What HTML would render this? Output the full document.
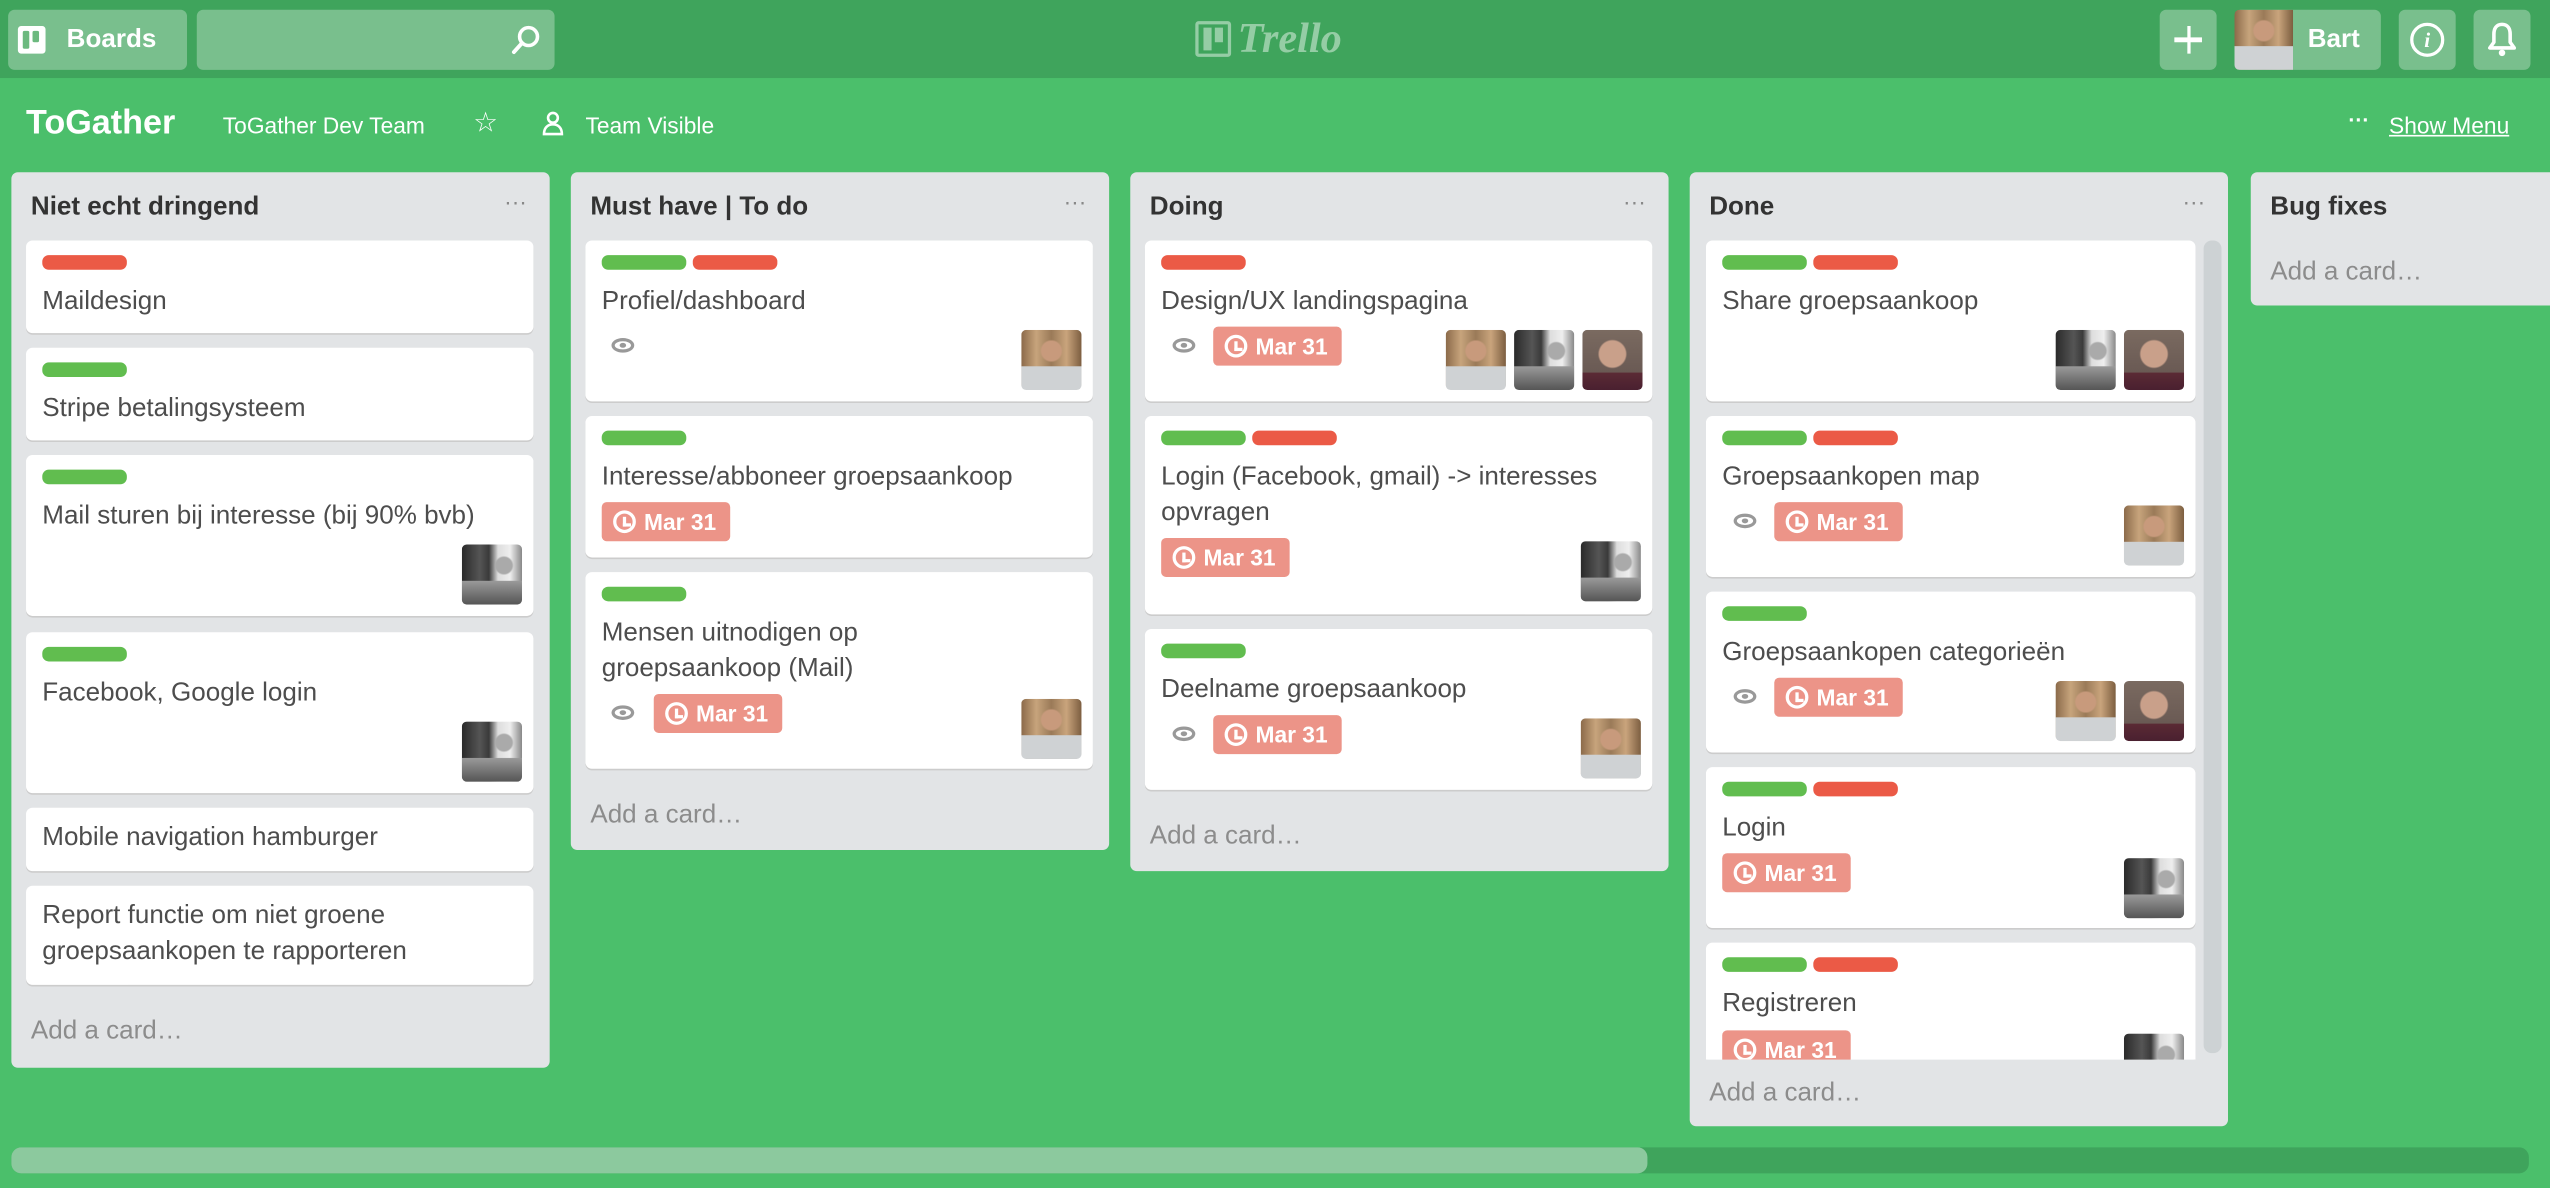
<!DOCTYPE html>
<html><head><meta charset="utf-8">
<style>
*{box-sizing:border-box;margin:0;padding:0}
html,body{width:2550px;height:1188px;overflow:hidden;background:#4bbf6b}
#w{position:absolute;left:0;top:0;width:1568px;height:731px;transform:scale(1.62628,1.6252);transform-origin:0 0;font-family:"Liberation Sans",sans-serif;color:#4d4d4d}
.ab{position:absolute}
.hdr{position:absolute;left:0;top:0;width:1568px;height:48px;background:#3fa45c}
.btn{position:absolute;top:6px;height:37px;border-radius:4px;background:rgba(255,255,255,0.3);color:#fff}
.list{position:absolute;top:106px;width:331px;background:#e2e4e6;border-radius:4px}
.lt{position:absolute;left:12px;top:12px;font-weight:bold;font-size:16px;color:#333}
.dots{position:absolute;right:14px;top:10px;color:#888;font-size:14px;letter-spacing:0}
.card{position:absolute;left:9px;width:312px;background:#fff;border-radius:4px;box-shadow:0 1px 0 #ccc}
.lb{position:absolute;top:9px;width:52px;height:9px;border-radius:4px}
.g{background:#61bd4f}.r{background:#eb5a46}
.tx{position:absolute;left:10px;top:27px;font-size:16px;line-height:22px;width:295px}
.due{position:absolute;height:24px;width:79px;background:#ec9488;border-radius:3px;color:#fff;font-size:14px;font-weight:bold;line-height:24px;padding-left:26px}
.due:before{content:"";position:absolute;left:7px;top:5px;border:2px solid #fff;border-radius:50%;box-sizing:content-box;width:10px;height:10px}
.due:after{content:"";position:absolute;left:13px;top:9px;width:3px;height:4px;border-left:2px solid #fff;border-bottom:2px solid #fff}
.eye{position:absolute;width:14px;height:9px;border:2px solid #999;border-radius:50%/50%;box-sizing:border-box}
.eye:after{content:"";position:absolute;left:3px;top:1px;width:4px;height:3px;background:#999;border-radius:50%}
.av{position:absolute;width:37px;height:37px;border-radius:3px;overflow:hidden}
.a1{background:radial-gradient(circle at 50% 35%,#c89a7c 0 6px,transparent 7px),linear-gradient(180deg,transparent 60%,#cfd2d4 61%),linear-gradient(90deg,#8b6a4a,#c7a47c 25%,#9a7a58 50%,#c9a47c 75%,#7c5e40)}
.a2{background:radial-gradient(circle at 70% 35%,#aaa 0 5px,transparent 6px),linear-gradient(180deg,transparent 60%,#999 61%,#555),linear-gradient(90deg,#2a2a2a,#555 30%,#3a3a3a 45%,#ddd 60%,#eee 80%,#888)}
.a3{background:radial-gradient(circle at 50% 40%,#c9a08a 0 8px,transparent 9px),linear-gradient(180deg,#7a6a60 0,#6a5a54 70%,#5a2a34 72%,#4a2030)}
.add{position:absolute;left:12px;font-size:16px;color:#8c8c8c}
</style></head><body>
<div id="w">
<div class="hdr"></div>
<div class="btn" style="left:5px;width:110px">
  <div class="ab" style="left:6px;top:10px;width:17px;height:17px;background:#fff;border-radius:2px"></div>
  <div class="ab" style="left:9px;top:13px;width:4px;height:11px;background:#6cb97f;border-radius:1px"></div>
  <div class="ab" style="left:15px;top:13px;width:4px;height:7px;background:#6cb97f;border-radius:1px"></div>
  <div class="ab" style="left:36px;top:10px;font-weight:bold;font-size:16px">Boards</div>
</div>
<div class="btn" style="left:121px;width:220px">
  <svg class="ab" style="left:192px;top:9px" width="20" height="20" viewBox="0 0 20 20"><circle cx="12" cy="7.5" r="5.5" fill="none" stroke="#fff" stroke-width="2.2"/><line x1="8" y1="11.5" x2="3" y2="17" stroke="#fff" stroke-width="2.4" stroke-linecap="round"/></svg>
</div>
<div class="ab" style="left:735px;top:13px;width:22px;height:22px;border:2px solid rgba(255,255,255,0.45);border-radius:2px"></div>
<div class="ab" style="left:740px;top:17px;width:5px;height:14px;background:rgba(255,255,255,0.45)"></div>
<div class="ab" style="left:747px;top:17px;width:5px;height:9px;background:rgba(255,255,255,0.45)"></div>
<div class="ab" style="left:761px;top:9px;font-family:'Liberation Serif',serif;font-style:italic;font-weight:bold;font-size:26px;color:rgba(255,255,255,0.45)">Trello</div>
<div class="btn" style="left:1328px;width:35px"><div class="ab" style="left:9px;top:17px;width:17px;height:2.5px;background:#fff"></div><div class="ab" style="left:16.5px;top:10px;width:2.5px;height:17px;background:#fff"></div></div>
<div class="btn" style="left:1374px;width:90px"><div class="av a1" style="left:0;top:0;width:36px;height:37px;border-radius:3px 0 0 3px"></div><div class="ab" style="left:45px;top:10px;font-weight:bold;font-size:16px">Bart</div></div>
<div class="btn" style="left:1475px;width:35px"><div class="ab" style="left:7px;top:8px;width:21px;height:21px;border:2px solid #fff;border-radius:50%;text-align:center;font-style:italic;font-weight:bold;font-size:13px;line-height:17px;font-family:'Liberation Serif',serif">i</div></div>
<div class="btn" style="left:1521px;width:35px"><svg class="ab" style="left:8px;top:7px" width="19" height="23" viewBox="0 0 19 23"><path d="M9.5 2c-3.5 0-5 2.6-5 6v5l-2.5 3.5h15L14.5 13V8c0-3.4-1.5-6-5-6z" fill="none" stroke="#fff" stroke-width="2.2" stroke-linejoin="round"/><circle cx="9.5" cy="19.5" r="2" fill="#fff"/></svg></div>

<div class="ab" style="left:16px;top:64px;font-weight:bold;font-size:21px;color:#fff">ToGather</div>
<div class="ab" style="left:137px;top:69px;font-size:14px;color:#fff">ToGather Dev Team</div>
<div class="ab" style="left:291px;top:66px;font-size:17px;color:#fff">☆</div>
<svg class="ab" style="left:333px;top:68px" width="14" height="16" viewBox="0 0 14 16"><circle cx="7" cy="4.5" r="3" fill="none" stroke="#fff" stroke-width="1.6"/><path d="M1.5 14.5c0-4 2.5-6 5.5-6s5.5 2 5.5 6z" fill="none" stroke="#fff" stroke-width="1.6"/></svg>
<div class="ab" style="left:360px;top:69px;font-size:14px;color:#fff">Team Visible</div>
<div class="ab" style="left:1444px;top:66px;font-size:13px;color:#fff;font-weight:bold">···</div>
<div class="ab" style="left:1469px;top:69px;font-size:14px;color:#fff;text-decoration:underline">Show Menu</div>

<div class="list" style="left:7px;height:551px">
 <div class="lt" style="top:13px">Niet echt dringend</div><div class="dots">···</div>
 <div class="card" style="top:42px;height:57px"><div class="lb r" style="left:10px"></div><div class="tx">Maildesign</div></div>
 <div class="card" style="top:108px;height:57px"><div class="lb g" style="left:10px"></div><div class="tx">Stripe betalingsysteem</div></div>
 <div class="card" style="top:174px;height:99px"><div class="lb g" style="left:10px"></div><div class="tx">Mail sturen bij interesse (bij 90% bvb)</div><div class="av a2" style="right:7px;top:55px"></div></div>
 <div class="card" style="top:283px;height:99px"><div class="lb g" style="left:10px"></div><div class="tx">Facebook, Google login</div><div class="av a2" style="right:7px;top:55px"></div></div>
 <div class="card" style="top:391px;height:39px"><div class="tx" style="top:8px">Mobile navigation hamburger</div></div>
 <div class="card" style="top:439px;height:61px"><div class="tx" style="top:8px">Report functie om niet groene groepsaankopen te rapporteren</div></div>
 <div class="add" style="top:520px">Add a card…</div>
</div>

<div class="list" style="left:351px;height:417px">
 <div class="lt" style="top:13px">Must have | To do</div><div class="dots">···</div>
 <div class="card" style="top:42px;height:99px"><div class="lb g" style="left:10px"></div><div class="lb r" style="left:66px"></div><div class="tx">Profiel/dashboard</div><div class="eye" style="left:16px;top:60px"></div><div class="av a1" style="right:7px;top:55px"></div></div>
 <div class="card" style="top:150px;height:87px"><div class="lb g" style="left:10px"></div><div class="tx">Interesse/abboneer groepsaankoop</div><div class="due" style="left:10px;top:53px">Mar 31</div></div>
 <div class="card" style="top:246px;height:121px"><div class="lb g" style="left:10px"></div><div class="tx">Mensen uitnodigen op<br>groepsaankoop (Mail)</div><div class="eye" style="left:16px;top:82px"></div><div class="due" style="left:42px;top:75px">Mar 31</div><div class="av a1" style="right:7px;top:78px"></div></div>
 <div class="add" style="top:387px">Add a card…</div>
</div>

<div class="list" style="left:695px;height:430px">
 <div class="lt" style="top:13px">Doing</div><div class="dots">···</div>
 <div class="card" style="top:42px;height:99px"><div class="lb r" style="left:10px"></div><div class="tx">Design/UX landingspagina</div><div class="eye" style="left:17px;top:60px"></div><div class="due" style="left:42px;top:53px">Mar 31</div><div class="av a1" style="left:185px;top:55px"></div><div class="av a2" style="left:227px;top:55px"></div><div class="av a3" style="left:269px;top:55px"></div></div>
 <div class="card" style="top:150px;height:122px"><div class="lb g" style="left:10px"></div><div class="lb r" style="left:66px"></div><div class="tx">Login (Facebook, gmail) -&gt; interesses opvragen</div><div class="due" style="left:10px;top:75px">Mar 31</div><div class="av a2" style="right:7px;top:77px"></div></div>
 <div class="card" style="top:281px;height:99px"><div class="lb g" style="left:10px"></div><div class="tx">Deelname groepsaankoop</div><div class="eye" style="left:17px;top:60px"></div><div class="due" style="left:42px;top:53px">Mar 31</div><div class="av a1" style="right:7px;top:55px"></div></div>
 <div class="add" style="top:400px">Add a card…</div>
</div>

<div class="list" style="left:1039px;height:587px">
 <div class="lt" style="top:13px">Done</div><div class="dots">···</div>
 <div class="ab" style="left:316px;top:42px;width:11px;height:500px;background:#cdd2d4;border-radius:5px"></div>
 <div class="ab" style="left:0;top:42px;width:316px;height:504px;overflow:hidden">
  <div class="card" style="left:10px;top:0;width:301px;height:99px"><div class="lb g" style="left:10px"></div><div class="lb r" style="left:66px"></div><div class="tx">Share groepsaankoop</div><div class="av a2" style="right:49px;top:55px"></div><div class="av a3" style="right:7px;top:55px"></div></div>
  <div class="card" style="left:10px;top:108px;width:301px;height:99px"><div class="lb g" style="left:10px"></div><div class="lb r" style="left:66px"></div><div class="tx">Groepsaankopen map</div><div class="eye" style="left:17px;top:60px"></div><div class="due" style="left:42px;top:53px">Mar 31</div><div class="av a1" style="right:7px;top:55px"></div></div>
  <div class="card" style="left:10px;top:216px;width:301px;height:99px"><div class="lb g" style="left:10px"></div><div class="tx">Groepsaankopen categorieën</div><div class="eye" style="left:17px;top:60px"></div><div class="due" style="left:42px;top:53px">Mar 31</div><div class="av a1" style="right:49px;top:55px"></div><div class="av a3" style="right:7px;top:55px"></div></div>
  <div class="card" style="left:10px;top:324px;width:301px;height:99px"><div class="lb g" style="left:10px"></div><div class="lb r" style="left:66px"></div><div class="tx">Login</div><div class="due" style="left:10px;top:53px">Mar 31</div><div class="av a2" style="right:7px;top:56px"></div></div>
  <div class="card" style="left:10px;top:432px;width:301px;height:99px"><div class="lb g" style="left:10px"></div><div class="lb r" style="left:66px"></div><div class="tx">Registreren</div><div class="due" style="left:10px;top:54px">Mar 31</div><div class="av a2" style="right:7px;top:56px"></div></div>
 </div>
 <div class="add" style="top:558px">Add a card…</div>
</div>

<div class="list" style="left:1384px;width:200px;height:82px">
 <div class="lt" style="top:13px">Bug fixes</div>
 <div class="add" style="top:53px">Add a card…</div>
</div>

<div class="ab" style="left:7px;top:706px;width:1548px;height:16px;background:#3fa45c;border-radius:6px"></div>
<div class="ab" style="left:7px;top:706px;width:1006px;height:16px;background:#8cc99e;border-radius:6px"></div>
</div>
</body></html>
